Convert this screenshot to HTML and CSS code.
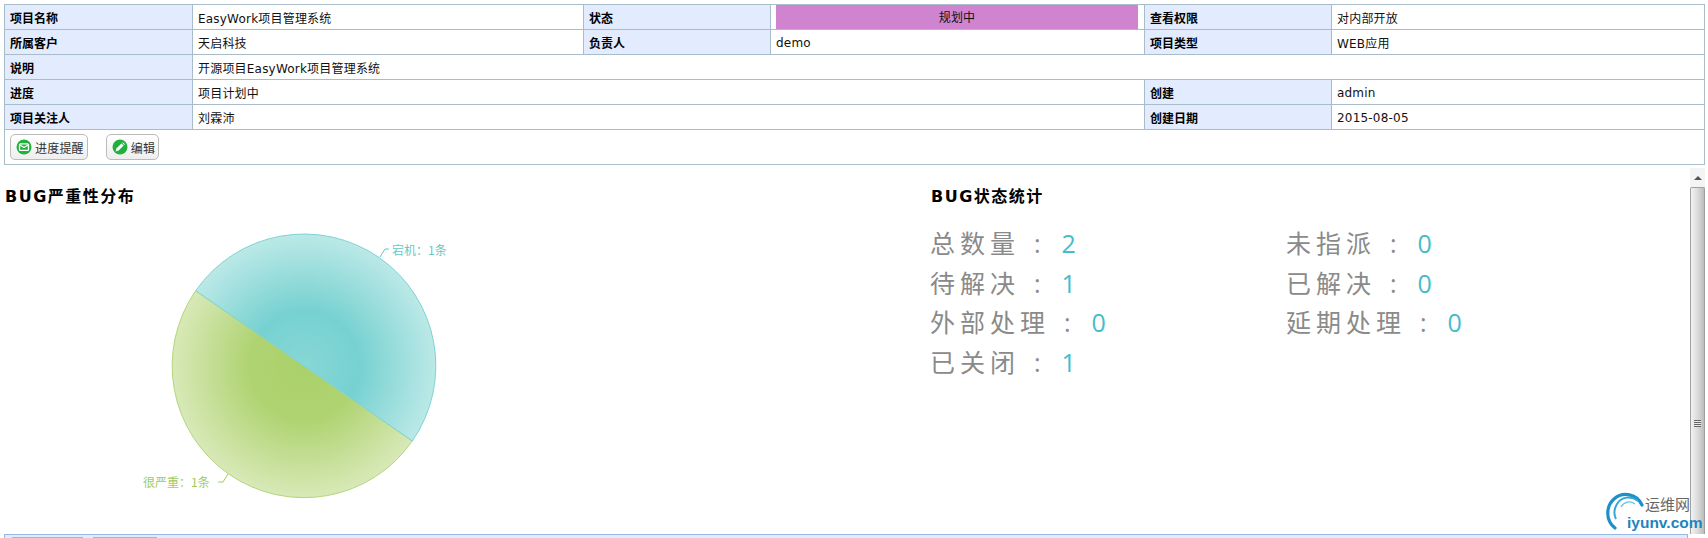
FILE: index.html
```html
<!DOCTYPE html>
<html lang="zh">
<head>
<meta charset="utf-8">
<title>EasyWork</title>
<link rel="stylesheet" href="styles.css">
</head>
<body>
<div class="page">
  <table class="info">
    <colgroup>
      <col class="c-1"><col class="c-2"><col class="c-3"><col class="c-4"><col class="c-5"><col>
    </colgroup>
    <tr>
      <th>项目名称</th><td>EasyWork项目管理系统</td><th>状态</th>
      <td class="status-cell"><div class="status">规划中</div></td>
      <th>查看权限</th><td>对内部开放</td>
    </tr>
    <tr>
      <th>所属客户</th><td>天启科技</td><th>负责人</th><td class="latin">demo</td><th>项目类型</th><td>WEB应用</td>
    </tr>
    <tr>
      <th>说明</th><td colspan="5">开源项目EasyWork项目管理系统</td>
    </tr>
    <tr>
      <th>进度</th><td colspan="3">项目计划中</td><th>创建</th><td class="latin">admin</td>
    </tr>
    <tr>
      <th>项目关注人</th><td colspan="3">刘霖沛</td><th>创建日期</th><td class="latin">2015-08-05</td>
    </tr>
    <tr>
      <td colspan="6" class="actions">
        <div class="actions-row">
          <a class="btn">
            <svg class="btn-icon" viewBox="0 0 16 16"><circle cx="8" cy="8" r="7.5" fill="#1fb13c"/><rect x="3.5" y="4.8" width="9" height="6.6" rx="1" fill="none" stroke="#fff" stroke-width="1.3"/><path d="M4 6l4 2.6L12 6" fill="none" stroke="#fff" stroke-width="1.2"/></svg>
            进度提醒
          </a>
          <a class="btn">
            <svg class="btn-icon" viewBox="0 0 16 16"><circle cx="8" cy="8" r="7.5" fill="#1fb13c"/><path d="M3.6 12.4l.8-3 5-5 2.2 2.2-5 5z" fill="#fff"/><path d="M10.2 3.8l.7-.6 2 2-.7.7z" fill="#fff"/></svg>
            编辑
          </a>
        </div>
      </td>
    </tr>
  </table>

  <div class="lower">
    <div class="charts">
      <section class="severity">
        <h3 class="title">BUG严重性分布</h3>
        <svg class="pie" viewBox="4 41 456 295" width="456" height="295">
          <defs>
            <radialGradient id="teal" gradientUnits="userSpaceOnUse" cx="304" cy="196" r="132">
              <stop offset="0" stop-color="#87d7d6"/>
              <stop offset="0.42" stop-color="#77d1d1"/>
              <stop offset="1" stop-color="#bbe9e7"/>
            </radialGradient>
            <radialGradient id="green" gradientUnits="userSpaceOnUse" cx="304" cy="196" r="132">
              <stop offset="0" stop-color="#a9d16a"/>
              <stop offset="0.42" stop-color="#b0d372"/>
              <stop offset="1" stop-color="#d8e9b8"/>
            </radialGradient>
          </defs>
          <path class="slice-b" d="M195.7 120.7A131.8 131.8 0 0 0 412.3 271Z"/>
          <path class="slice-a" d="M195.7 120.7A131.8 131.8 0 0 1 412.3 271Z"/>
          <path class="lead-a" d="M380 87l5-8h4"/>
          <path class="lead-b" d="M228 304l-5 8h-5"/>
          <text class="lab-a" x="392" y="85">宕机：1条</text>
          <text class="lab-b" x="143" y="317">很严重：1条</text>
        </svg>
      </section>
      <section class="state">
        <h3 class="title">BUG状态统计</h3>
        <div class="stats">
          <div class="stat">总数量 : <b>2</b></div><div class="stat">未指派 : <b>0</b></div>
          <div class="stat">待解决 : <b>1</b></div><div class="stat">已解决 : <b>0</b></div>
          <div class="stat">外部处理 : <b>0</b></div><div class="stat">延期处理 : <b>0</b></div>
          <div class="stat">已关闭 : <b>1</b></div>
        </div>
      </section>
    </div>
    <div class="scrollbar">
      <div class="sb-up"><span class="sb-arrow"></span></div>
      <div class="sb-thumb"><div class="sb-grip"></div></div>
    </div>
  </div>

  <div class="tabs">
    <div class="tab tab-a"></div>
    <div class="tab tab-b"></div>
  </div>
</div>

<div class="mark">
  <svg class="mark-logo" viewBox="0 0 44 44" width="44" height="44">
    <path d="M37 15C32 4 18 1 9 9C1 16 0 30 10 38" fill="none" stroke="#1c90c8" stroke-width="3.2" stroke-linecap="round"/>
    <path d="M33 11C26 5 16 7 12 14C9 19 9 25 11 29" fill="none" stroke="#35a6d6" stroke-width="2"/>
    <path d="M30 14C25 10 19 12 16 17" fill="none" stroke="#6cc0e4" stroke-width="1.3"/>
  </svg>
  <span class="mark-cn">运维网</span>
  <span class="mark-en">iyunv.com</span>
</div>
</body>
</html>
```

FILE: styles.css
```css
* { box-sizing: border-box; }
html, body { margin: 0; padding: 0; height: 538px; overflow: hidden; background: #fff; }
body { font-family: "DejaVu Sans", "Noto Sans CJK SC", sans-serif; font-size: 12px; color: #111; position: relative; }

.page { padding: 4px 3px 0 4px; height: 538px; display: flex; flex-direction: column; }

.info { width: 100%; border-collapse: collapse; table-layout: fixed; border: 1px solid #a9bcc9; }
.info th, .info td { border: 1px solid #a9bcc9; height: 25px; padding: 0 5px; text-align: left; font-size: 12px; font-weight: normal; letter-spacing: 0.2px; }
.info th { background: #e2ecfe; font-weight: bold; color: #000; font-family: "Noto Sans CJK SC", sans-serif; letter-spacing: 0; }
.info td { background: #fff; }
.info .latin { padding-top: 2px; }
.c-1 { width: 188px; }
.c-2 { width: 391px; }
.c-3 { width: 187px; }
.c-4 { width: 374px; }
.c-5 { width: 187px; }

.info .status-cell { padding: 0 6px 0 5px; }
.status { background: #d084cf; height: 24px; line-height: 26px; text-align: center; }

.info .actions { height: 35px; padding: 0 5px; }
.actions-row { display: flex; gap: 18px; }
.btn { display: flex; align-items: center; gap: 3px; height: 26px; padding: 0 3px 0 5px; border: 1px solid #bbb; border-radius: 5px; background: linear-gradient(#fff, #eee); color: #333; }
.btn-icon { width: 16px; height: 16px; }

.lower { flex: 1; display: flex; min-height: 0; }
.charts { flex: 1; display: flex; min-width: 0; }
.severity { width: 926px; }
.state { flex: 1; }
.title { margin: 0; padding: 23px 0 0 1px; height: 46px; font-size: 16px; line-height: 18px; font-weight: bold; letter-spacing: 1.5px; color: #000; font-family: "DejaVu Sans", "Noto Sans CJK SC", sans-serif; }

.pie { display: block; }
.slice-a { fill: url(#teal); stroke: #7ed3d2; stroke-width: 1; }
.slice-b { fill: url(#green); stroke: #b4d67b; stroke-width: 1; }
.lead-a { fill: none; stroke: #5fcac6; }
.lead-b { fill: none; stroke: #a0cc5a; }
.lab-a { fill: #5fcac6; font-size: 12px; font-family: "Noto Sans CJK SC", sans-serif; }
.lab-b { fill: #a0cc5a; font-size: 12px; font-family: "Noto Sans CJK SC", sans-serif; }

.stats { display: grid; grid-template-columns: 356px 356px; grid-auto-rows: 39.7px; margin-top: 12px; }
.stat { font-family: "Open Sans", "Noto Sans CJK SC", sans-serif; font-size: 25px; letter-spacing: 5px; word-spacing: 2.5px; line-height: 40px; color: #8a8a8a; white-space: nowrap; }
.stat b { font-weight: normal; color: #45bccb; letter-spacing: 0; margin-left: 2px; }

.scrollbar { width: 15px; margin-top: 3px; display: flex; flex-direction: column; background: #f3f3f3; }
.sb-up { height: 19px; flex: none; display: flex; align-items: center; justify-content: center; background: #f4f4f4; }
.sb-arrow { width: 0; height: 0; border-left: 4px solid transparent; border-right: 4px solid transparent; border-bottom: 4px solid #555; }
.sb-thumb { flex: 1; display: flex; align-items: flex-start; justify-content: center; padding-top: 232px; border: 1px solid #a0a0a0; border-bottom: 0; border-radius: 2px 2px 0 0; background: linear-gradient(90deg, #f2f2f2, #dcdcdc 50%, #bcbcbc); }
.sb-grip { width: 7px; height: 7px; background: repeating-linear-gradient(#666 0 1px, #e8e8e8 1px 2px); }

.tabs { height: 4px; margin-right: 17px; flex: none; display: flex; gap: 10px; padding: 2px 0 0 7px; border: 1px solid #95b8e7; border-bottom: 0; background: #e0ecff; }
.tab { height: 1px; background: #95b8e7; }
.tab-a { width: 71px; }
.tab-b { width: 64px; }

.mark { position: absolute; left: 1605px; top: 490px; width: 100px; height: 44px; }
.mark-logo { position: absolute; left: 0; top: 0; }
.mark-cn { position: absolute; left: 40px; top: 5px; font-family: "Noto Sans CJK SC", sans-serif; font-size: 15px; line-height: 18px; color: #666; }
.mark-en { position: absolute; left: 22px; top: 24px; font-family: "Liberation Sans", sans-serif; font-weight: bold; font-size: 15.5px; line-height: 18px; color: #1d84bd; }
```
